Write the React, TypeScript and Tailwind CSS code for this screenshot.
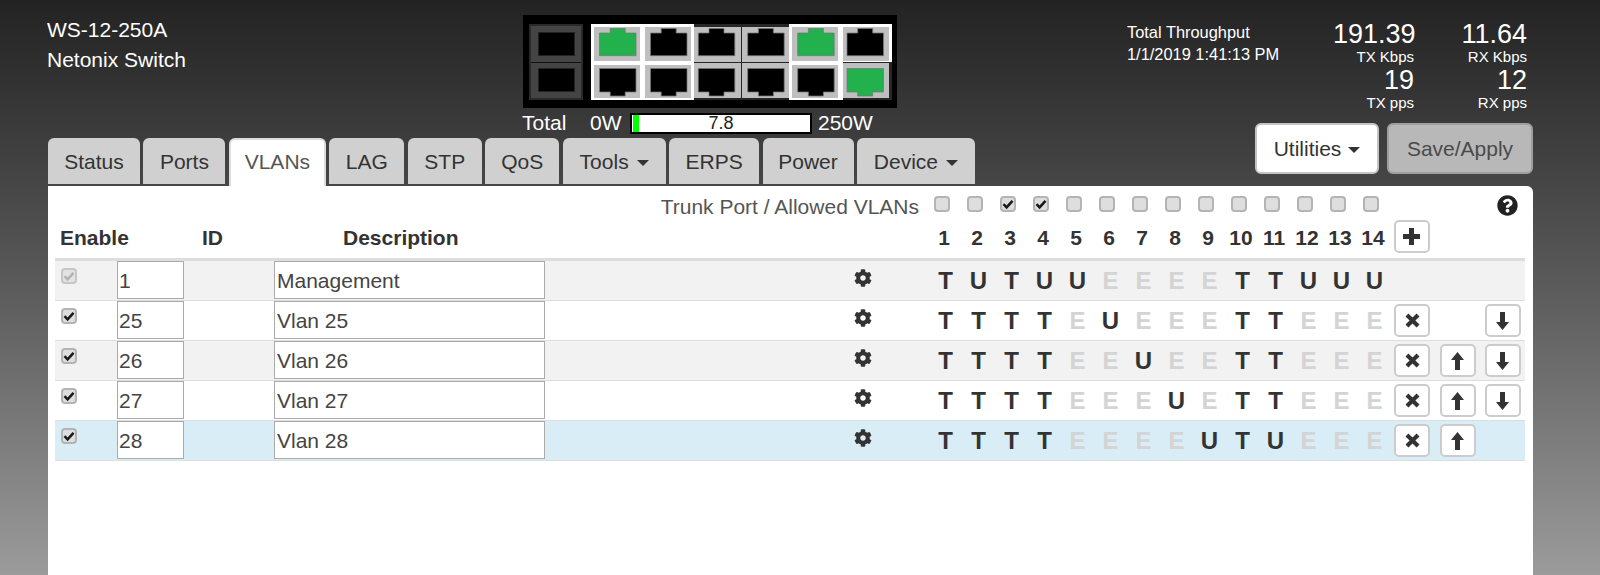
import { FaCog, FaQuestionCircle } from 'react-icons/fa'

const tabs = [
  { label: 'Status', width: 'w-[92px]' },
  { label: 'Ports', width: 'w-[82px]' },
  { label: 'VLANs', width: 'w-[97px]', active: true },
  { label: 'LAG', width: 'w-[75px]' },
  { label: 'STP', width: 'w-[74px]' },
  { label: 'QoS', width: 'w-[74px]' },
  { label: 'Tools', width: 'w-[103px]', caret: true },
  { label: 'ERPS', width: 'w-[90px]' },
  { label: 'Power', width: 'w-[91px]' },
  { label: 'Device', width: 'w-[118px]', caret: true },
]

const vlans = [
  { id: '1', desc: 'Management', ports: 'TUTUUEEEETTUUU', bg: 'bg-[#f2f2f2]', locked: true },
  { id: '25', desc: 'Vlan 25', ports: 'TTTTEUEEETTEEE', bg: 'bg-white', down: true, remove: true },
  { id: '26', desc: 'Vlan 26', ports: 'TTTTEEUEETTEEE', bg: 'bg-[#f2f2f2]', up: true, down: true, remove: true },
  { id: '27', desc: 'Vlan 27', ports: 'TTTTEEEUETTEEE', bg: 'bg-white', up: true, down: true, remove: true },
  { id: '28', desc: 'Vlan 28', ports: 'TTTTEEEEUTUEEE', bg: 'bg-[#d9edf7]', up: true, remove: true },
]

const trunkChecked = [3, 4]
const portNums = [1, 2, 3, 4, 5, 6, 7, 8, 9, 10, 11, 12, 13, 14]

// 스위치 포트 하나 (위쪽/아래쪽 줄)
function SwitchPort({ on, flip, width, height, inset }: { on?: boolean; flip?: boolean; width: number; height: number; inset: number }) {
  const l = inset
  const r = inset + 36.5
  const nl = l + 10.7
  const nr = l + 25.7
  const off = flip ? height - 33 : 0
  const points = flip
    ? `${l},3.5 ${r},3.5 ${r},27 ${nr},27 ${nr},31 ${nl},31 ${nl},27 ${l},27`
    : `${nl},1.5 ${nr},1.5 ${nr},6 ${r},6 ${r},28.7 ${l},28.7 ${l},6 ${nl},6`
  return (
    <svg width={width} height={height} className="block">
      <rect width={width} height={height} fill="#bfbfbf" />
      <polygon points={points} transform={`translate(0 ${off})`} fill={on ? '#22b14c' : '#000000'} stroke="#777777" strokeWidth={0.75} />
    </svg>
  )
}

function SwitchPanel() {
  const cols = [
    { w: 'w-[51px]', pad: 'pl-[3px]', pw: 46, inset: 5.5, topOn: true, top: true, bottom: true },
    { w: 'w-[52px]', pad: 'pl-[3px]', pw: 46, inset: 5.5, top: true, bottom: true },
    { w: 'w-[48px]', pad: '', pw: 47, inset: 4.3 },
    { w: 'w-[47px]', pad: '', pw: 47, inset: 5.7 },
    { w: 'w-[54px]', pad: 'pl-[3px]', pw: 46, inset: 5.7, topOn: true, top: true, bottom: true },
    { w: 'w-[49px]', pad: '', pw: 46, inset: 4, top: true, bottomOn: true },
  ]
  return (
    <div className="flex w-[374px] h-[93px] bg-black pt-[9px] pl-[6px]">
      {/* SFP */}
      <div className="flex flex-col w-[54px] h-[76px] bg-[#444444] border-2 border-[#2a2a2a]">
        <div className="flex-1 flex items-center justify-center border-b border-[#111111]">
          <div className="w-[37px] h-[24px] bg-black border border-[#222222]" />
        </div>
        <div className="flex-1 flex items-center justify-center">
          <div className="w-[37px] h-[24px] bg-black border border-[#222222]" />
        </div>
      </div>
      <div className="flex ml-[8px] h-[76px] bg-[#262626]">
        {cols.map((c, i) => (
          <div key={i} className={`flex flex-col ${c.w}`}>
            <div className={`h-[38px] pt-[3px] ${c.pad} ${c.top ? 'bg-white' : ''}`}>
              <SwitchPort on={c.topOn} width={c.pw} height={c.top ? 34 : 35} inset={c.inset} />
            </div>
            <div className={`h-[38px] ${c.pad} ${c.bottom ? 'bg-white pt-[3px]' : 'pt-[1px]'}`}>
              <SwitchPort on={c.bottomOn} flip width={c.pw} height={c.bottom ? 33 : 35} inset={c.inset} />
            </div>
          </div>
        ))}
      </div>
    </div>
  )
}

function Check({ checked, disabled }: { checked?: boolean; disabled?: boolean }) {
  return (
    <div className={`flex items-center justify-center w-[16px] h-[16px] rounded-[4px] border-2 border-[#b4b4b4] bg-[#dedede] ${disabled ? 'opacity-70' : ''}`}>
      {checked && (
        <svg width="12" height="12" viewBox="0 0 12 12" className="shrink-0">
          <path d="M1.5 6.2 L4.6 9.3 L10.5 2.8" fill="none" stroke={disabled ? '#999999' : '#1a1a1a'} strokeWidth={2.6} />
        </svg>
      )}
    </div>
  )
}

function PlusIcon() {
  return (
    <svg width="17" height="17" viewBox="0 0 17 17" fill="#333333">
      <path d="M6 0h5v6h6v5h-6v6H6v-6H0V6h6z" />
    </svg>
  )
}

function RemoveIcon() {
  return (
    <svg width="15" height="15" viewBox="0 0 15 15" fill="#333333">
      <path d="M3.4 0.5 7.5 4.6 11.6 0.5 14.5 3.4 10.4 7.5 14.5 11.6 11.6 14.5 7.5 10.4 3.4 14.5 0.5 11.6 4.6 7.5 0.5 3.4z" />
    </svg>
  )
}

function ArrowIcon({ down }: { down?: boolean }) {
  return (
    <svg width="13" height="18" viewBox="0 0 13 18" fill="#333333" className={down ? 'rotate-180' : ''}>
      <path d="M6.5 0 13 8H9v10H4V8H0z" />
    </svg>
  )
}

function IconBtn({ children, className = '' }: { children: React.ReactNode; className?: string }) {
  return (
    <button className={`flex items-center justify-center w-[36px] h-[33px] bg-white border-2 border-[#cccccc] rounded-[5px] ${className}`}>
      {children}
    </button>
  )
}

function Stat({ value, label, width }: { value: string; label: string; width: string }) {
  return (
    <div className={`text-right ${width}`}>
      <div className="text-[27px] leading-[27px] text-white">{value}</div>
      <div className="text-[15px] leading-[19px] -mt-[1px] mb-[1px] text-white">{label}</div>
    </div>
  )
}

export default function App() {
  return (
    <div
      className="flex flex-col h-[575px] overflow-hidden bg-gradient-to-b from-[#232323] to-[#9b9b9b] pl-[48px] pr-[67px] text-[21px]"
      style={{ fontFamily: '"Liberation Sans", Arial, sans-serif' }}
    >
      <div className="flex justify-between">
        {/* 왼쪽: 제목, 스위치, 탭 */}
        <div className="flex flex-col">
          <div className="flex pt-[15px]">
            <div className="w-[475px] -ml-[1px] mr-[1px] leading-[30px] text-white">
              <div>WS-12-250A</div>
              <div>Netonix Switch</div>
            </div>
            <div className="flex flex-col">
              <SwitchPanel />
              <div className="flex items-center h-[30px] text-white">
                <span className="w-[67px] -ml-[1px] mr-[1px]">Total</span>
                <span className="w-[40px]">0W</span>
                <div className="relative flex items-center justify-center w-[182px] h-[21px] border-2 border-black bg-white text-[18px] text-[#222222]">
                  <span className="absolute left-0 top-0 bottom-0 w-[6px] bg-[#00ff00] ml-[1px]" />
                  7.8
                </div>
                <span className="ml-[6px]">250W</span>
              </div>
            </div>
          </div>
          <div className="flex gap-[3.44px] h-[48px] text-[#333333]">
            {tabs.map((t) => (
              <div
                key={t.label}
                className={`flex items-center justify-center rounded-t-[6px] ${t.width} ${
                  t.active ? 'h-[48px] pb-[2px] bg-white text-[#555555] border-x-2 border-t-2 border-[#dddddd]' : 'h-[46px] pt-[2px] bg-[#d0d0d0]'
                }`}
              >
                {t.label}
                {t.caret && <span className="ml-[8px] mt-[2px] border-x-[6px] border-t-[6px] border-x-transparent border-t-[#333333]" />}
              </div>
            ))}
          </div>
        </div>

        {/* 오른쪽: 처리량, 버튼 */}
        <div className="flex flex-col w-[406px]">
          <div className="flex pt-[21px]">
            <div className="w-[206px] text-[16.4px] leading-[22px] text-white">
              <div>Total Throughput</div>
              <div>1/1/2019 1:41:13 PM</div>
            </div>
            <div className="flex flex-col">
              <div className="flex">
                <Stat value="191.39" label="TX Kbps" width="w-[81px]" />
                <Stat value="11.64" label="RX Kbps" width="w-[113px]" />
              </div>
              <div className="flex">
                <Stat value="19" label="TX pps" width="w-[81px]" />
                <Stat value="12" label="RX pps" width="w-[113px]" />
              </div>
            </div>
          </div>
          <div className="flex justify-end gap-[8px] mt-[10px]">
            <button className="flex items-center justify-center w-[124px] h-[51px] bg-white border-2 border-[#c4c4c4] rounded-[6px] text-[#333333]">
              Utilities
              <span className="ml-[7px] mt-[2px] border-x-[6px] border-t-[6px] border-x-transparent border-t-[#333333]" />
            </button>
            <button className="w-[146px] h-[51px] bg-[#b8b8b8] border-2 border-[#9e9e9e] rounded-[6px] text-[#4a4a4a]">
              Save/Apply
            </button>
          </div>
        </div>
      </div>

      {/* 본문 패널 */}
      <div className="flex-1 bg-white rounded-tr-[6px] pl-[7px] pr-[8px] text-[#333333]">
        <div className="relative flex items-center h-[34px] pt-[2px]">
          <div className="w-[864px] pt-[6px] text-right text-[#555555]">Trunk Port / Allowed VLANs</div>
          <div className="flex ml-[9px]">
            {portNums.map((n) => (
              <div key={n} className="flex justify-center w-[33px] pr-[5px]">
                <Check checked={trunkChecked.includes(n)} />
              </div>
            ))}
          </div>
          <FaQuestionCircle className="absolute right-[7px] top-[9px] text-[21px] text-[#222222]" />
        </div>
        <div className="flex h-[41px] border-b-[3px] border-[#dddddd] font-bold leading-[36px]">
          <div className="w-[147px] pl-[5px]">Enable</div>
          <div className="w-[141px]">ID</div>
          <div className="w-[584.5px]">Description</div>
          <div className="flex">
            {portNums.map((n) => (
              <div key={n} className="w-[33px] text-center">{n}</div>
            ))}
          </div>
          <IconBtn className="ml-[4px]"><PlusIcon /></IconBtn>
        </div>
        {vlans.map((v) => (
          <div key={v.id} className={`flex h-[40px] border-b border-[#dddddd] ${v.bg}`}>
            <div className="w-[62px] pl-[6px] pt-[7px]">
              <Check checked disabled={v.locked} />
            </div>
            <input
              readOnly
              value={v.id}
              className="w-[67px] h-[38px] mr-[90px] pl-[1px] pt-[1px] border border-[#aaaaaa] bg-white text-[#444444] outline-none"
            />
            <input
              readOnly
              value={v.desc}
              className="w-[271px] h-[38px] pl-[2px] pt-[1px] border border-[#aaaaaa] bg-white text-[#444444] outline-none"
            />
            <div className="w-[384px] pl-[309px] pt-[8px] text-[18px] text-[#333333]">
              <FaCog />
            </div>
            <div className="flex mt-[3px] h-[34px] items-center">
              {v.ports.split('').map((p, i) => (
                <div
                  key={i}
                  className={`w-[33px] text-center text-[24px] font-bold ${p === 'E' ? 'text-[#d4d4d4]' : 'text-[#333333]'}`}
                >
                  {p}
                </div>
              ))}
            </div>
            <div className="flex ml-[3px] pt-[3px]">
              <div className="w-[45.5px]">{v.remove && <IconBtn><RemoveIcon /></IconBtn>}</div>
              <div className="w-[45px]">{v.up && <IconBtn><ArrowIcon /></IconBtn>}</div>
              <div className="w-[36px]">{v.down && <IconBtn><ArrowIcon down /></IconBtn>}</div>
            </div>
          </div>
        ))}
      </div>
    </div>
  )
}
